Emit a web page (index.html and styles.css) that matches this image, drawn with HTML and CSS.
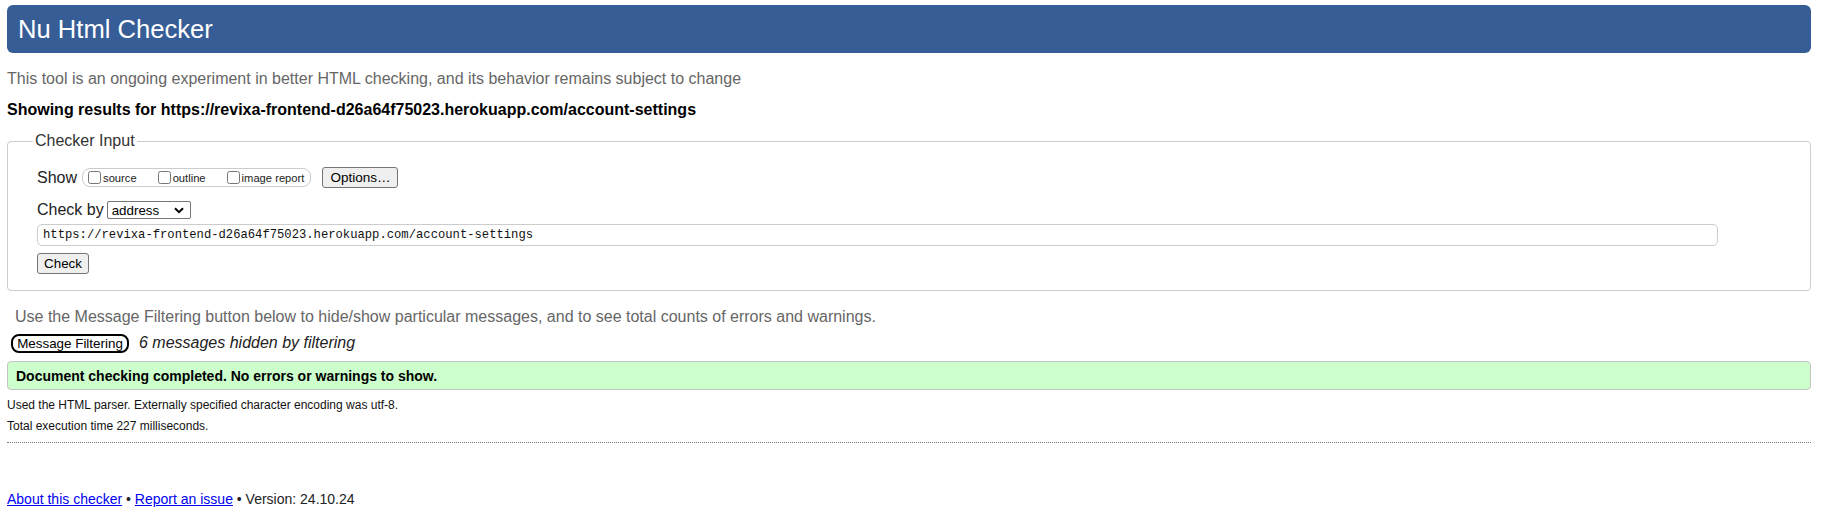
FILE: index.html
```html
<!DOCTYPE html>
<html lang="en">
<head>
<meta charset="utf-8">
<title>Nu Html Checker</title>
<link rel="stylesheet" href="styles.css">
</head>
<body>
<header class="masthead"><h1 class="title">Nu Html Checker</h1></header>
<p class="intro">This tool is an ongoing experiment in better HTML checking, and its behavior remains subject to change</p>
<p class="showing">Showing results for https://revixa-frontend-d26a64f75023.herokuapp.com/account-settings</p>
<fieldset class="checker">
  <legend class="checker-legend">Checker Input</legend>
  <div class="show-row">
    <span class="row-label">Show</span>
    <span class="show-opts">
      <label class="opt"><input type="checkbox" class="cb">source</label>
      <label class="opt"><input type="checkbox" class="cb">outline</label>
      <label class="opt"><input type="checkbox" class="cb">image report</label>
    </span>
    <button class="btn options-btn" type="button">Options…</button>
  </div>
  <div class="checkby-row">
    <span class="row-label">Check by</span>
    <span class="select"><span class="select-text">address</span><svg class="chev" width="10" height="7" viewBox="0 0 10 7"><path d="M1 1.2 L5 5.2 L9 1.2" fill="none" stroke="#000" stroke-width="2"/></svg></span>
  </div>
  <div class="url">https://revixa-frontend-d26a64f75023.herokuapp.com/account-settings</div>
  <button class="btn check-btn" type="button">Check</button>
</fieldset>
<p class="filter-note">Use the Message Filtering button below to hide/show particular messages, and to see total counts of errors and warnings.</p>
<div class="filter-row">
  <button class="filter-btn" type="button">Message Filtering</button>
  <span class="hidden-count">6 messages hidden by filtering</span>
</div>
<p class="success">Document checking completed. No errors or warnings to show.</p>
<p class="details first">Used the HTML parser. Externally specified character encoding was utf-8.</p>
<p class="details">Total execution time 227 milliseconds.</p>
<div class="dotted"></div>
<footer class="foot"><a href="#" class="link">About this checker</a> • <a href="#" class="link">Report an issue</a> • Version: 24.10.24</footer>
</body>
</html>
```
FILE: styles.css
```css
html, body {
  margin: 0;
  background: #ffffff;
}
body {
  padding: 5px 20px 0 7px;
  font-family: "Liberation Sans", Arial, sans-serif;
  color: #000;
}
.masthead {
  background: #365d95;
  border-radius: 6px;
  height: 48px;
  display: flex;
  align-items: center;
  padding: 0 11px;
}
.title {
  margin: 0;
  font-size: 25.6px;
  font-weight: normal;
  color: #fff;
  line-height: 30px;
  padding-bottom: 1px;
}
.intro {
  margin: 16px 0 0;
  font-size: 16px;
  line-height: 20px;
  color: #666;
}
.showing {
  margin: 11px 0 0;
  font-size: 16px;
  font-weight: bold;
  line-height: 20px;
}
.checker {
  margin: 11px 0 0;
  border: 1px solid #cccccc;
  border-radius: 4px;
  padding: 0 92px 16px 29px;
}
.checker-legend {
  font-size: 16px;
  line-height: 20px;
  color: #333;
  padding: 0 2px;
  margin-left: -4px;
}
.show-row {
  display: flex;
  align-items: center;
  height: 21px;
  margin-top: 16px;
}
.row-label {
  font-size: 16px;
  color: #222;
}
.show-opts {
  margin-left: 5px;
  height: 17px;
  border: 1px solid #cccccc;
  border-radius: 8px;
  display: flex;
  align-items: center;
  padding: 0 6px 0 5px;
  white-space: nowrap;
}
.opt {
  display: flex;
  align-items: center;
  font-size: 11.2px;
  color: #222;
  margin-right: 21px;
  white-space: nowrap;
}
.opt:last-child { margin-right: 0; }
.cb {
  margin: 0 2px 0 0;
  width: 13px;
  height: 13px;
}
.btn {
  font-family: "Liberation Sans", Arial, sans-serif;
  background: #efefef;
  border: 1px solid #767676;
  border-radius: 3px;
  color: #000;
  padding: 0;
}
.options-btn {
  margin-left: 11px;
  width: 76px;
  height: 21px;
  font-size: 13.5px;
}
.checkby-row {
  display: flex;
  align-items: center;
  margin-top: 13px;
  height: 18px;
}
.select {
  margin-left: 3px;
  width: 84px;
  height: 18px;
  box-sizing: border-box;
  border: 1px solid #767676;
  border-radius: 2px;
  display: flex;
  align-items: center;
  justify-content: space-between;
  padding: 0 6px 0 4px;
  font-size: 13.33px;
}
.chev { display: block; }
.url {
  margin-top: 5px;
  height: 22px;
  box-sizing: border-box;
  border: 1px solid #cccccc;
  border-radius: 5px;
  padding: 0 5px;
  display: flex;
  align-items: center;
  font-family: "Liberation Mono", "DejaVu Sans Mono", monospace;
  font-size: 12.2px;
  color: #111;
}
.check-btn {
  display: block;
  margin-top: 7px;
  width: 52px;
  height: 21px;
  font-size: 13.33px;
}
.filter-note {
  margin: 16px 0 0;
  padding-left: 8px;
  font-size: 16px;
  line-height: 20px;
  color: #666;
}
.filter-row {
  display: flex;
  align-items: center;
  margin-top: 5px;
  height: 22px;
}
.filter-btn {
  margin-left: 4px;
  height: 19px;
  width: 118px;
  box-sizing: border-box;
  border: 2px solid #000;
  border-radius: 8px;
  background: #fff;
  font-family: "Liberation Sans", Arial, sans-serif;
  font-size: 13.4px;
  padding: 0;
  color: #000;
}
.hidden-count {
  margin-left: 10px;
  font-size: 16px;
  font-style: italic;
  color: #222;
}
.success {
  margin: 7px 0 0;
  height: 29px;
  box-sizing: border-box;
  background: #ccffcc;
  border: 1px solid #c4c4c4;
  border-radius: 4px;
  padding: 0 8px;
  display: flex;
  align-items: center;
  font-size: 14px;
  font-weight: bold;
}
.details {
  margin: 3px 0 0;
  font-size: 12px;
  line-height: 18px;
  color: #111;
}
.details.first { margin-top: 6px; }
.dotted {
  margin-top: 7px;
  border-top: 1px dotted #777;
}
.foot {
  margin-top: 47px;
  font-size: 14px;
  line-height: 18px;
  color: #222;
}
.link { color: #0000ee; }
```
